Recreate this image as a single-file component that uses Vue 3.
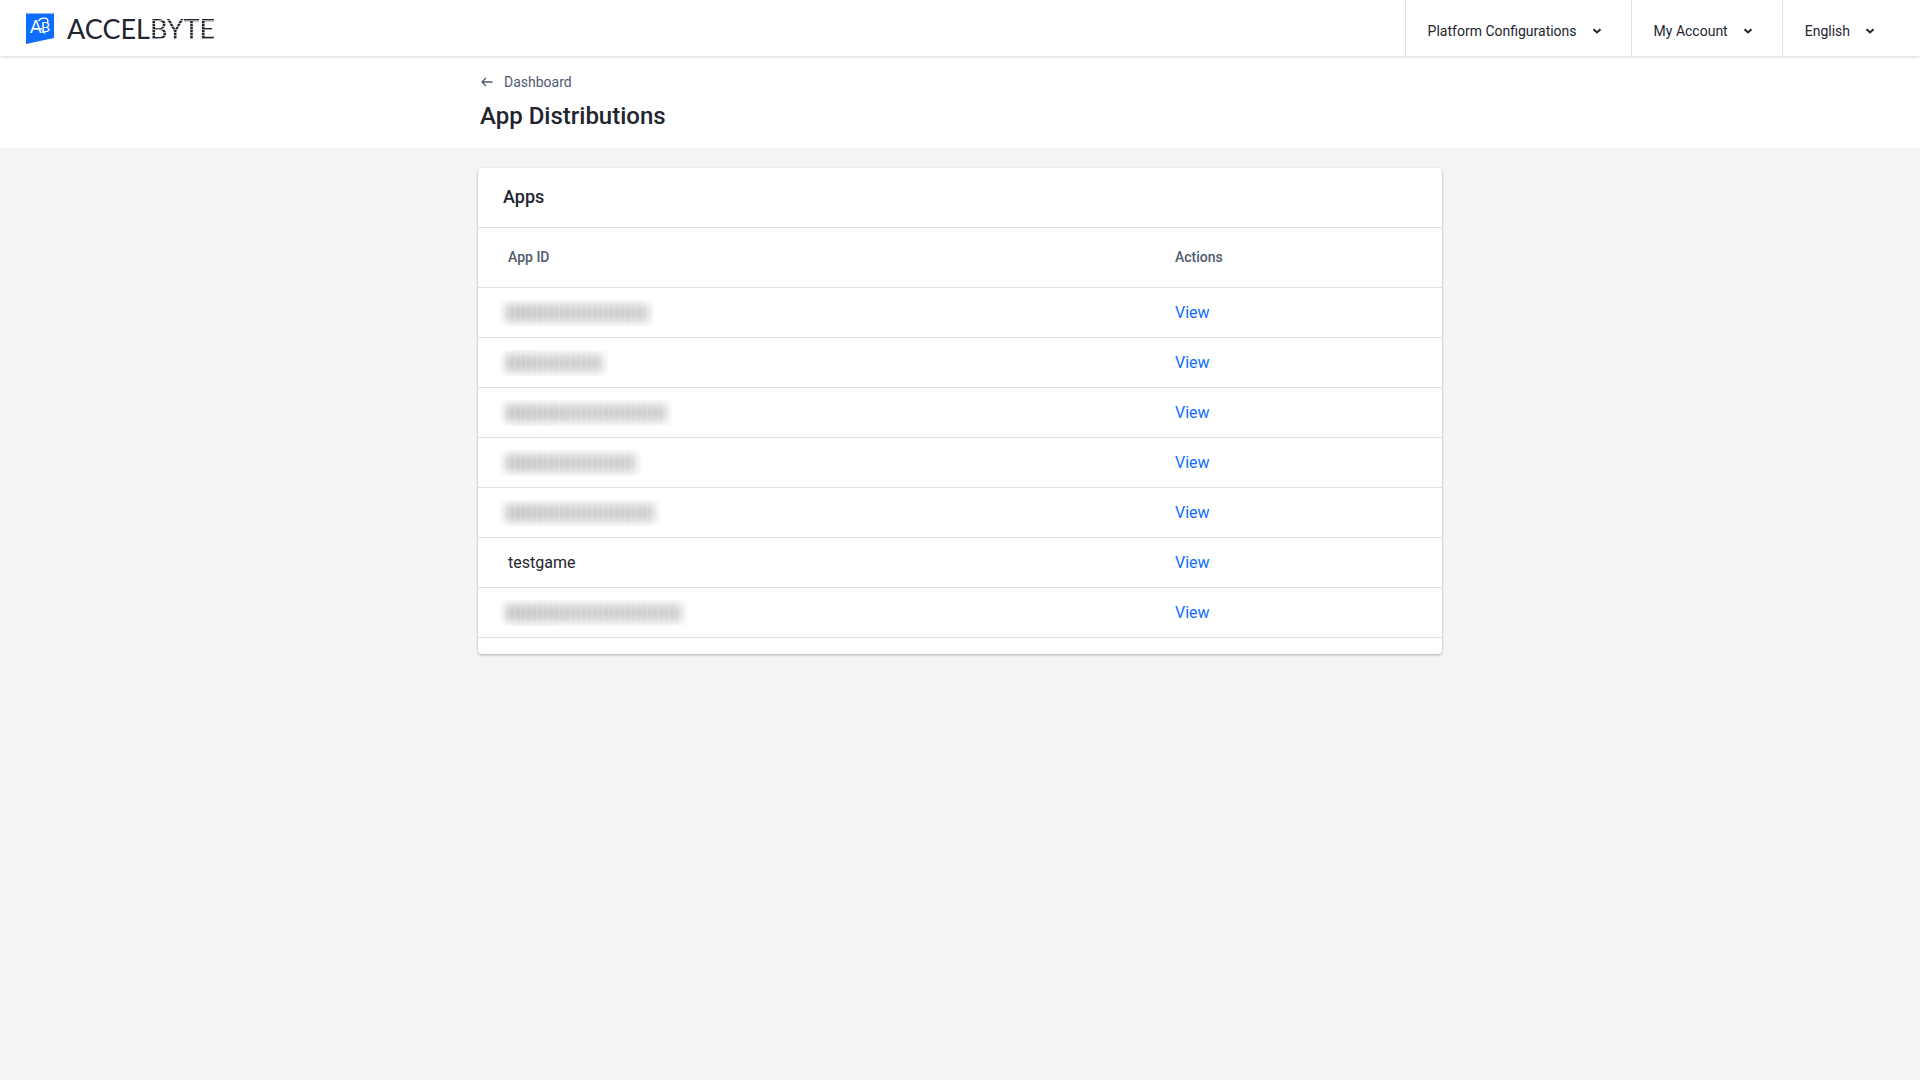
<script setup>
const menus = ['Platform Configurations', 'My Account', 'English']

const apps = [
  { hidden: true, width: 154 },
  { hidden: true, width: 108 },
  { hidden: true, width: 172 },
  { hidden: true, width: 141 },
  { hidden: true, width: 160 },
  { id: 'testgame' },
  { hidden: true, width: 187 },
]
</script>

<template>
  <div class="page">
    <header class="topbar">
      <a class="brand" href="#" aria-label="AccelByte">
        <svg class="mark" width="28" height="31" viewBox="0 0 28 31" aria-hidden="true">
          <path d="M0 0.5H28V25L0 31Z" fill="#0d6efd" />
          <text x="4" y="20" class="mark-letter">A</text>
          <text x="15" y="19" class="mark-letter mark-b">B</text>
          <path d="M12.5 8C14 5.4 17 4.6 20 5.4c2.4.8 2.4 3.400 1 4.600M8 16h8M16 19c1.500 0 2 1 3.500 1" fill="none" stroke="#fff" stroke-width="1.300" />
        </svg>
        <span class="wordmark">ACCEL<span class="striped">BYTE</span></span>
      </a>
      <nav class="menus">
        <button v-for="menu in menus" :key="menu" type="button" class="menu">
          <span>{{ menu }}</span>
          <svg width="10" height="8" viewBox="0 0 10 8" aria-hidden="true">
            <path d="M1.500 2.200L5 5.500L8.500 2.200" fill="none" stroke="#22252f" stroke-width="2" />
          </svg>
        </button>
      </nav>
    </header>

    <section class="heading">
      <div class="container">
        <a class="back" href="#">
          <svg width="12" height="10" viewBox="0 0 12 10" aria-hidden="true">
            <path d="M5 1L1 5L5 9M1 5H11.5" fill="none" stroke="#4f5b6f" stroke-width="1.3" />
          </svg>
          <span>Dashboard</span>
        </a>
        <h1>App Distributions</h1>
      </div>
    </section>

    <main class="container">
      <section class="card">
        <h2>Apps</h2>
        <table>
          <thead>
            <tr>
              <th scope="col">App ID</th>
              <th scope="col" class="actions">Actions</th>
            </tr>
          </thead>
          <tbody>
            <tr v-for="(app, i) in apps" :key="i">
              <td>
                <span v-if="app.hidden" class="redacted" :style="{ width: app.width + 'px' }"></span>
                <template v-else>{{ app.id }}</template>
              </td>
              <td><a class="view" href="#">View</a></td>
            </tr>
          </tbody>
        </table>
      </section>
    </main>
  </div>
</template>

<style>
body {
  margin: 0;
  background: #f4f5f7;
}
</style>

<style scoped>
.page {
  min-height: 100vh;
  background: #f4f5f7;
  color: #22252f;
  font-family: Roboto, sans-serif;
  font-size: 16px;
}

.topbar {
  position: relative;
  display: flex;
  justify-content: space-between;
  height: 56px;
  background: #fff;
  box-shadow: 0 1px 4px rgba(0, 0, 0, 0.16);
}

.brand {
  display: flex;
  align-items: center;
  gap: 13px;
  padding-left: 26px;
  color: #22252f;
  text-decoration: none;
}

.mark-letter {
  fill: #fff;
  font: 17px Lato, sans-serif;
}

.mark-b {
  font-size: 14px;
}

.wordmark {
  padding-top: 2px;
  font: 27px/32px Lato, sans-serif;
}

.striped {
  color: transparent;
  background: repeating-linear-gradient(#22252f 0 2px, #a4a6ab 2px 3px);
  background-clip: text;
}

.menus {
  display: flex;
}

.menu {
  display: flex;
  align-items: center;
  gap: 15px;
  padding: 6px 29px 0 22px;
  border: 0;
  border-left: 1px solid #dfe1e5;
  background: none;
  color: inherit;
  font: 14px/20px Roboto, sans-serif;
}

.menu:last-child {
  padding-right: 45px;
}

.heading {
  height: 92px;
  background: #fff;
}

.container {
  width: 964px;
  max-width: 100%;
  margin: 0 auto;
}

.back {
  display: flex;
  align-items: center;
  gap: 11px;
  padding: 16px 0 0 3px;
  color: #4f5b6f;
  font-size: 14px;
  line-height: 20px;
  text-decoration: none;
}

h1 {
  margin: 8px 0 0 2px;
  font-size: 24px;
  line-height: 32px;
  font-weight: 500;
}

.card {
  margin-top: 20px;
  padding-bottom: 16px;
  border-radius: 4px;
  background: #fff;
  box-shadow: 0 1px 3px rgba(0, 0, 0, 0.3);
}

h2 {
  margin: 0;
  padding: 16px 25px 17px;
  border-bottom: 1px solid #dfe2e5;
  font-size: 18px;
  line-height: 26px;
  font-weight: 500;
}

table {
  width: 100%;
  border-collapse: separate;
  border-spacing: 0;
  table-layout: fixed;
}

th,
td {
  box-sizing: border-box;
  height: 50px;
  padding: 0 30px;
  border-bottom: 1px solid #e0e1e3;
  text-align: left;
}

th {
  height: 60px;
  padding-bottom: 2px;
  color: #4f5b6f;
  font-size: 14px;
  font-weight: 500;
}

.actions {
  width: 297px;
}

.view {
  color: #0d6efd;
  text-decoration: none;
}

.redacted {
  position: relative;
  display: block;
  height: 26px;
  margin-left: -8px;
  overflow: hidden;
}

.redacted::before {
  content: '';
  position: absolute;
  inset: 4px 5px;
  background: linear-gradient(90deg, #c8c9cb, #cfd0d2 40%, #cfd0d2);
  filter: blur(4px);
}

.redacted::after {
  content: '';
  position: absolute;
  inset: 0;
  background: repeating-linear-gradient(90deg, transparent 0 3px, rgba(255, 255, 255, 0.12) 3px 5px, transparent 5px 9px, rgba(255, 255, 255, 0.08) 9px 11px);
}
</style>
